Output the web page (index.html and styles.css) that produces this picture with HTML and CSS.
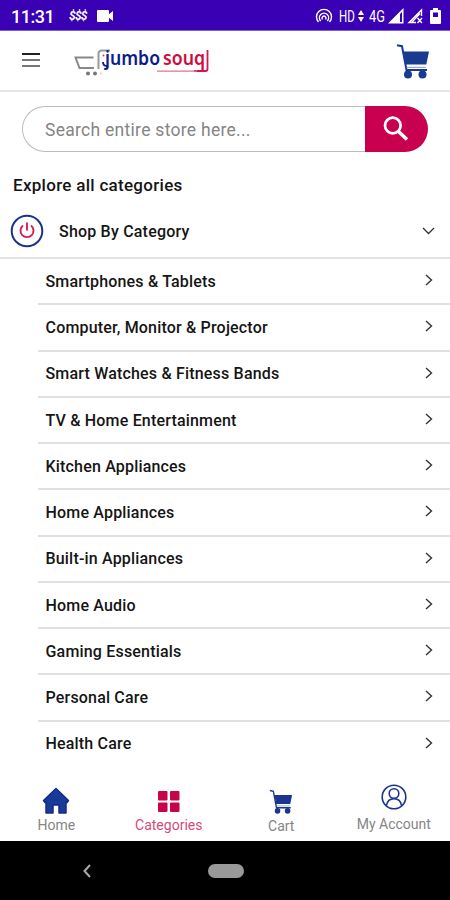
FILE: index.html
```html
<!DOCTYPE html>
<html lang="en">
<head>
<meta charset="utf-8">
<title>Jumbo Souq</title>
<link rel="stylesheet" href="styles.css">
</head>
<body>
<svg class="defs" width="0" height="0" aria-hidden="true">
  <symbol id="cart" viewBox="0 0 34 36">
    <path d="M1 2.200 6 3.200 10.500 27H31" fill="none" stroke="currentColor" stroke-width="2"/>
    <path d="M7.500 8.500H33L30.300 21.500H10Z" fill="currentColor"/>
    <path d="M10.500 24.300H30" stroke="#8795c4" stroke-width="1"/>
    <circle cx="12" cy="31.500" r="4" fill="currentColor"/><circle cx="26.500" cy="31.500" r="4" fill="currentColor"/>
  </symbol>
  <symbol id="chev" viewBox="0 0 8 12"><path d="M1 1 6.500 6 1 11" fill="none" stroke="#333" stroke-width="1.400"/></symbol>
</svg>
<div class="status">
  <span class="time">11:31</span>
  <span class="sss">$$$</span>
  <svg class="cam" width="16" height="12" viewBox="0 0 16 12"><rect width="12" height="12" rx="1" fill="#fff"/><path d="M11 5 16 1V11L11 7Z" fill="#fff"/></svg>
  <svg class="hotspot" width="18" height="16" viewBox="0 0 18 16" fill="none" stroke="#fff" stroke-width="1.400"><path d="M3.500 14A7.500 7.500 0 1 1 14.500 14M5.700 13A4.600 4.600 0 1 1 12.300 13M7.500 11.500A2 2 0 1 1 10.500 11.500"/></svg>
  <span class="net hd">HD</span>
  <svg class="arrows" width="6" height="12" viewBox="0 0 6 12" fill="#fff"><path d="M3 0 6 5H0ZM0 7H6L3 12Z"/></svg>
  <span class="net g4">4G</span>
  <svg class="sig1" width="16" height="16" viewBox="0 0 16 16"><path d="M0 15.500 15.500 0V15.500Z" fill="#fff"/><path d="M12 6 14 4V14H12Z" fill="#3900b4"/></svg>
  <svg class="sig2" width="16" height="16" viewBox="0 0 16 16"><path d="M14.500 8V2L2 14.500H9M5 14 13 5.500M10.500 10 15 15M15 10 10.500 15" fill="none" stroke="#fff" stroke-width="1.400"/></svg>
  <svg class="bat" width="11" height="16" viewBox="0 0 11 16"><path d="M3 0H8V2H10Q11 2 11 3V15Q11 16 10 16H1Q0 16 0 15V3Q0 2 1 2H3Z" fill="#fff"/><rect x="3" y="4.500" width="5" height="4.500" fill="#3900b4"/></svg>
</div>
<header class="header">
  <div class="burger"><i></i><i></i><i></i></div>
  <svg class="logo" width="138" height="44" viewBox="0 -6 138 44">
    <g fill="none" stroke="#888" stroke-width="2"><path d="M19.500 11.500H1.500L5.500 22H20"/><path d="M24.500 23V8Q24.500 4.500 28 4.500H36" stroke="#999"/></g>
    <circle cx="14" cy="27.500" r="2" fill="#777"/><circle cx="21" cy="27.500" r="2" fill="#777"/><circle cx="27" cy="27.500" r="1.200" fill="#ddd"/>
    <circle cx="29.500" cy="9.500" r="0.900" fill="#d62b5c"/>
    <path d="M29 16Q29 20 33 20" fill="none" stroke="#0b1c8c" stroke-width="1.800"/>
    <text class="logo-text" x="31" y="19" textLength="55" lengthAdjust="spacingAndGlyphs" fill="#0b1c8c">jumbo</text>
    <text class="logo-text" x="89" y="19" textLength="42" lengthAdjust="spacingAndGlyphs" fill="#d00a40">souq</text>
    <path d="M133.500 4V23Q133.500 25 131.500 25H120" fill="none" stroke="#d0184b" stroke-width="1.800"/><path d="M83 25.200H123" stroke="#e0708f" stroke-width="1.200"/>
  </svg>
  <svg class="cart-top" width="34" height="36"><use href="#cart"/></svg>
</header>
<div class="search">
  <div class="field"><span>Search entire store here...</span></div>
  <div class="go"><svg width="26" height="26" viewBox="0 0 26 26" fill="none" stroke="#fff"><circle cx="9.800" cy="9.500" r="7.800" stroke-width="2.700"/><path d="M15.500 15.500 24 23.500" stroke-width="3.500"/></svg></div>
</div>
<h1 class="title"><span>Explore all categories</span></h1>
<div class="group">
  <svg width="34" height="34" viewBox="0 0 34 34" fill="none"><circle cx="17" cy="17" r="15.300" stroke="#1b318d" stroke-width="2"/><path d="M13 11.500A6.500 6.500 0 1 0 21 11.500M17 8.500V16.500" stroke="#d51d55" stroke-width="1.900"/></svg>
  <span class="group-name">Shop By Category</span>
  <svg class="down" width="13" height="8" viewBox="0 0 13 8"><path d="M1 1 6.500 6.500 12 1" fill="none" stroke="#333" stroke-width="1.300"/></svg>
</div>
<ul class="list">
  <li><span>Smartphones &amp; Tablets</span><svg><use href="#chev"/></svg></li>
  <li><span>Computer, Monitor &amp; Projector</span><svg><use href="#chev"/></svg></li>
  <li><span>Smart Watches &amp; Fitness Bands</span><svg><use href="#chev"/></svg></li>
  <li><span>TV &amp; Home Entertainment</span><svg><use href="#chev"/></svg></li>
  <li><span>Kitchen Appliances</span><svg><use href="#chev"/></svg></li>
  <li><span>Home Appliances</span><svg><use href="#chev"/></svg></li>
  <li><span>Built-in Appliances</span><svg><use href="#chev"/></svg></li>
  <li><span>Home Audio</span><svg><use href="#chev"/></svg></li>
  <li><span>Gaming Essentials</span><svg><use href="#chev"/></svg></li>
  <li><span>Personal Care</span><svg><use href="#chev"/></svg></li>
  <li><span>Health Care</span><svg><use href="#chev"/></svg></li>
</ul>
<nav class="tabs">
  <div class="tab home"><svg width="28" height="28" viewBox="0 0 28 28"><path d="M14 1.500 26.500 13.500 25 15.500H24V26H17V18H11V26H4V15.500H3L1.500 13.500Z" fill="#183a99" stroke="#142a88" stroke-width="1.500" stroke-linejoin="round"/></svg><span>Home</span></div>
  <div class="tab cats"><svg width="22" height="22" viewBox="0 0 22 22" fill="#c40549"><rect width="9.500" height="9.500" rx="1"/><rect x="12" width="9.500" height="9.500" rx="1"/><rect y="11.500" width="9.500" height="9.500" rx="1"/><rect x="12" y="11.500" width="9.500" height="9.500" rx="1"/></svg><span>Categories</span></div>
  <div class="tab cart"><svg width="24" height="25"><use href="#cart"/></svg><span>Cart</span></div>
  <div class="tab account"><svg width="26" height="26" viewBox="0 0 26 26" fill="none" stroke="#1b348f" stroke-width="1.600"><circle cx="13" cy="13" r="11.800"/><circle cx="13" cy="9.500" r="4.800"/><path d="M5.500 21.500Q6.500 14.800 13 14.800T20.500 21.500"/></svg><span>My Account</span></div>
</nav>
<footer class="sys">
  <svg width="8" height="14" viewBox="0 0 8 14"><path d="M7 1 1.500 7 7 13" fill="none" stroke="#aaa" stroke-width="2"/></svg>
  <div class="pill"></div>
</footer>
</body>
</html>
```
FILE: styles.css
```css
* { box-sizing: border-box; }
body { margin: 0; width: 450px; height: 900px; overflow: hidden; background: #fff; font-family: Roboto, sans-serif; color: #151515; display: flex; flex-direction: column; }
body > * { flex: none; }
.defs { display: block; height: 0; }
svg { display: block; flex: none; }
span { white-space: nowrap; }
.status { height: 31px; background: #3900b4; border-bottom: 1px solid #7a63cf; color: #fff; display: flex; align-items: center; padding: 2px 9px 0 11px; }
.time { font-size: 18px; font-weight: 500; width: 58px; letter-spacing: -0.500px; }
.sss { font-size: 12px; font-weight: 700; font-style: italic; letter-spacing: -0.800px; width: 28px; }
.hotspot { margin-left: auto; margin-right: 1px; }
.net { font-size: 16px; transform-origin: 0 50%; }
.hd { width: 16px; margin: 0 3px 0 5px; transform: scaleX(0.720); }
.g4 { width: 17px; margin: 0 2px 0 5px; transform: scaleX(0.800); }
.sig2 { margin: 0 7px 0 3px; }
.header { height: 61px; border-bottom: 2px solid #e5e5e5; display: flex; align-items: center; padding: 0 20px 0 22px; }
.burger { width: 18px; display: flex; flex-direction: column; gap: 4px; margin-top: -1px; }
.burger i { height: 2px; background: #777; }
.burger i:first-child { background: #222; }
.logo { margin: 2px 0 0 34px; }
.logo-text { font: 600 20px "Noto Sans", sans-serif; }
.cart-top { margin: 0 0 0 auto; color: #183a91; }
.search { height: 46px; margin: 14px 22px 0 22px; display: flex; }
.field { width: 343px; border: 1.500px solid #bbb; border-right: 0; border-radius: 23px 0 0 23px; padding: 1px 0 0 22px; display: flex; align-items: center; font-size: 17.500px; color: #858585; letter-spacing: 0.280px; }
.go { flex: 1; background: #c90050; border-radius: 0 23px 23px 0; display: flex; align-items: center; padding-left: 18px; }
.title { margin: 0; height: 52px; padding: 23px 0 0 13px; font-size: 17px; line-height: 20px; font-weight: 500; letter-spacing: 0.290px; }
.group { height: 55px; border-bottom: 2px solid #e3e3e3; display: flex; align-items: center; padding: 0 15px 0 10px; }
.group-name { margin-left: 15px; padding-top: 2px; font-size: 16px; font-weight: 500; letter-spacing: 0.200px; }
.down { margin-left: auto; }
.list { list-style: none; margin: 0 0 0 38px; padding: 0; height: 510px; }
.list li { height: 46.250px; border-bottom: 2px solid #e1e1e1; padding: 0 17px 0 7.500px; display: flex; align-items: center; justify-content: space-between; font-size: 16px; font-weight: 500; letter-spacing: 0.180px; }
.list li:last-child { border-bottom-color: transparent; }
.list li span { padding-top: 0.500px; }
.list svg { width: 8px; height: 12px; margin-top: -2px; }
.tabs { height: 72px; display: grid; grid-template-columns: repeat(4, 1fr); font-size: 14px; line-height: 16px; color: #858585; }
.tab { display: flex; flex-direction: column; align-items: center; letter-spacing: 0; }
.home { padding-top: 18px; }
.home span { margin-top: 2px; }
.cats { color: #d34b7a; padding-top: 22px; }
.cats span { margin-top: 4px; }
.cart { padding-top: 20px; color: #1b348f; }
.cart span { margin-top: 4px; color: #858585; }
.account { padding-top: 15px; }
.account span { margin-top: 6px; }
.sys { height: 60px; background: #000; display: flex; align-items: center; padding-left: 83px; }
.pill { width: 36px; height: 14px; border-radius: 7px; background: #999; margin-left: 117px; }
```
